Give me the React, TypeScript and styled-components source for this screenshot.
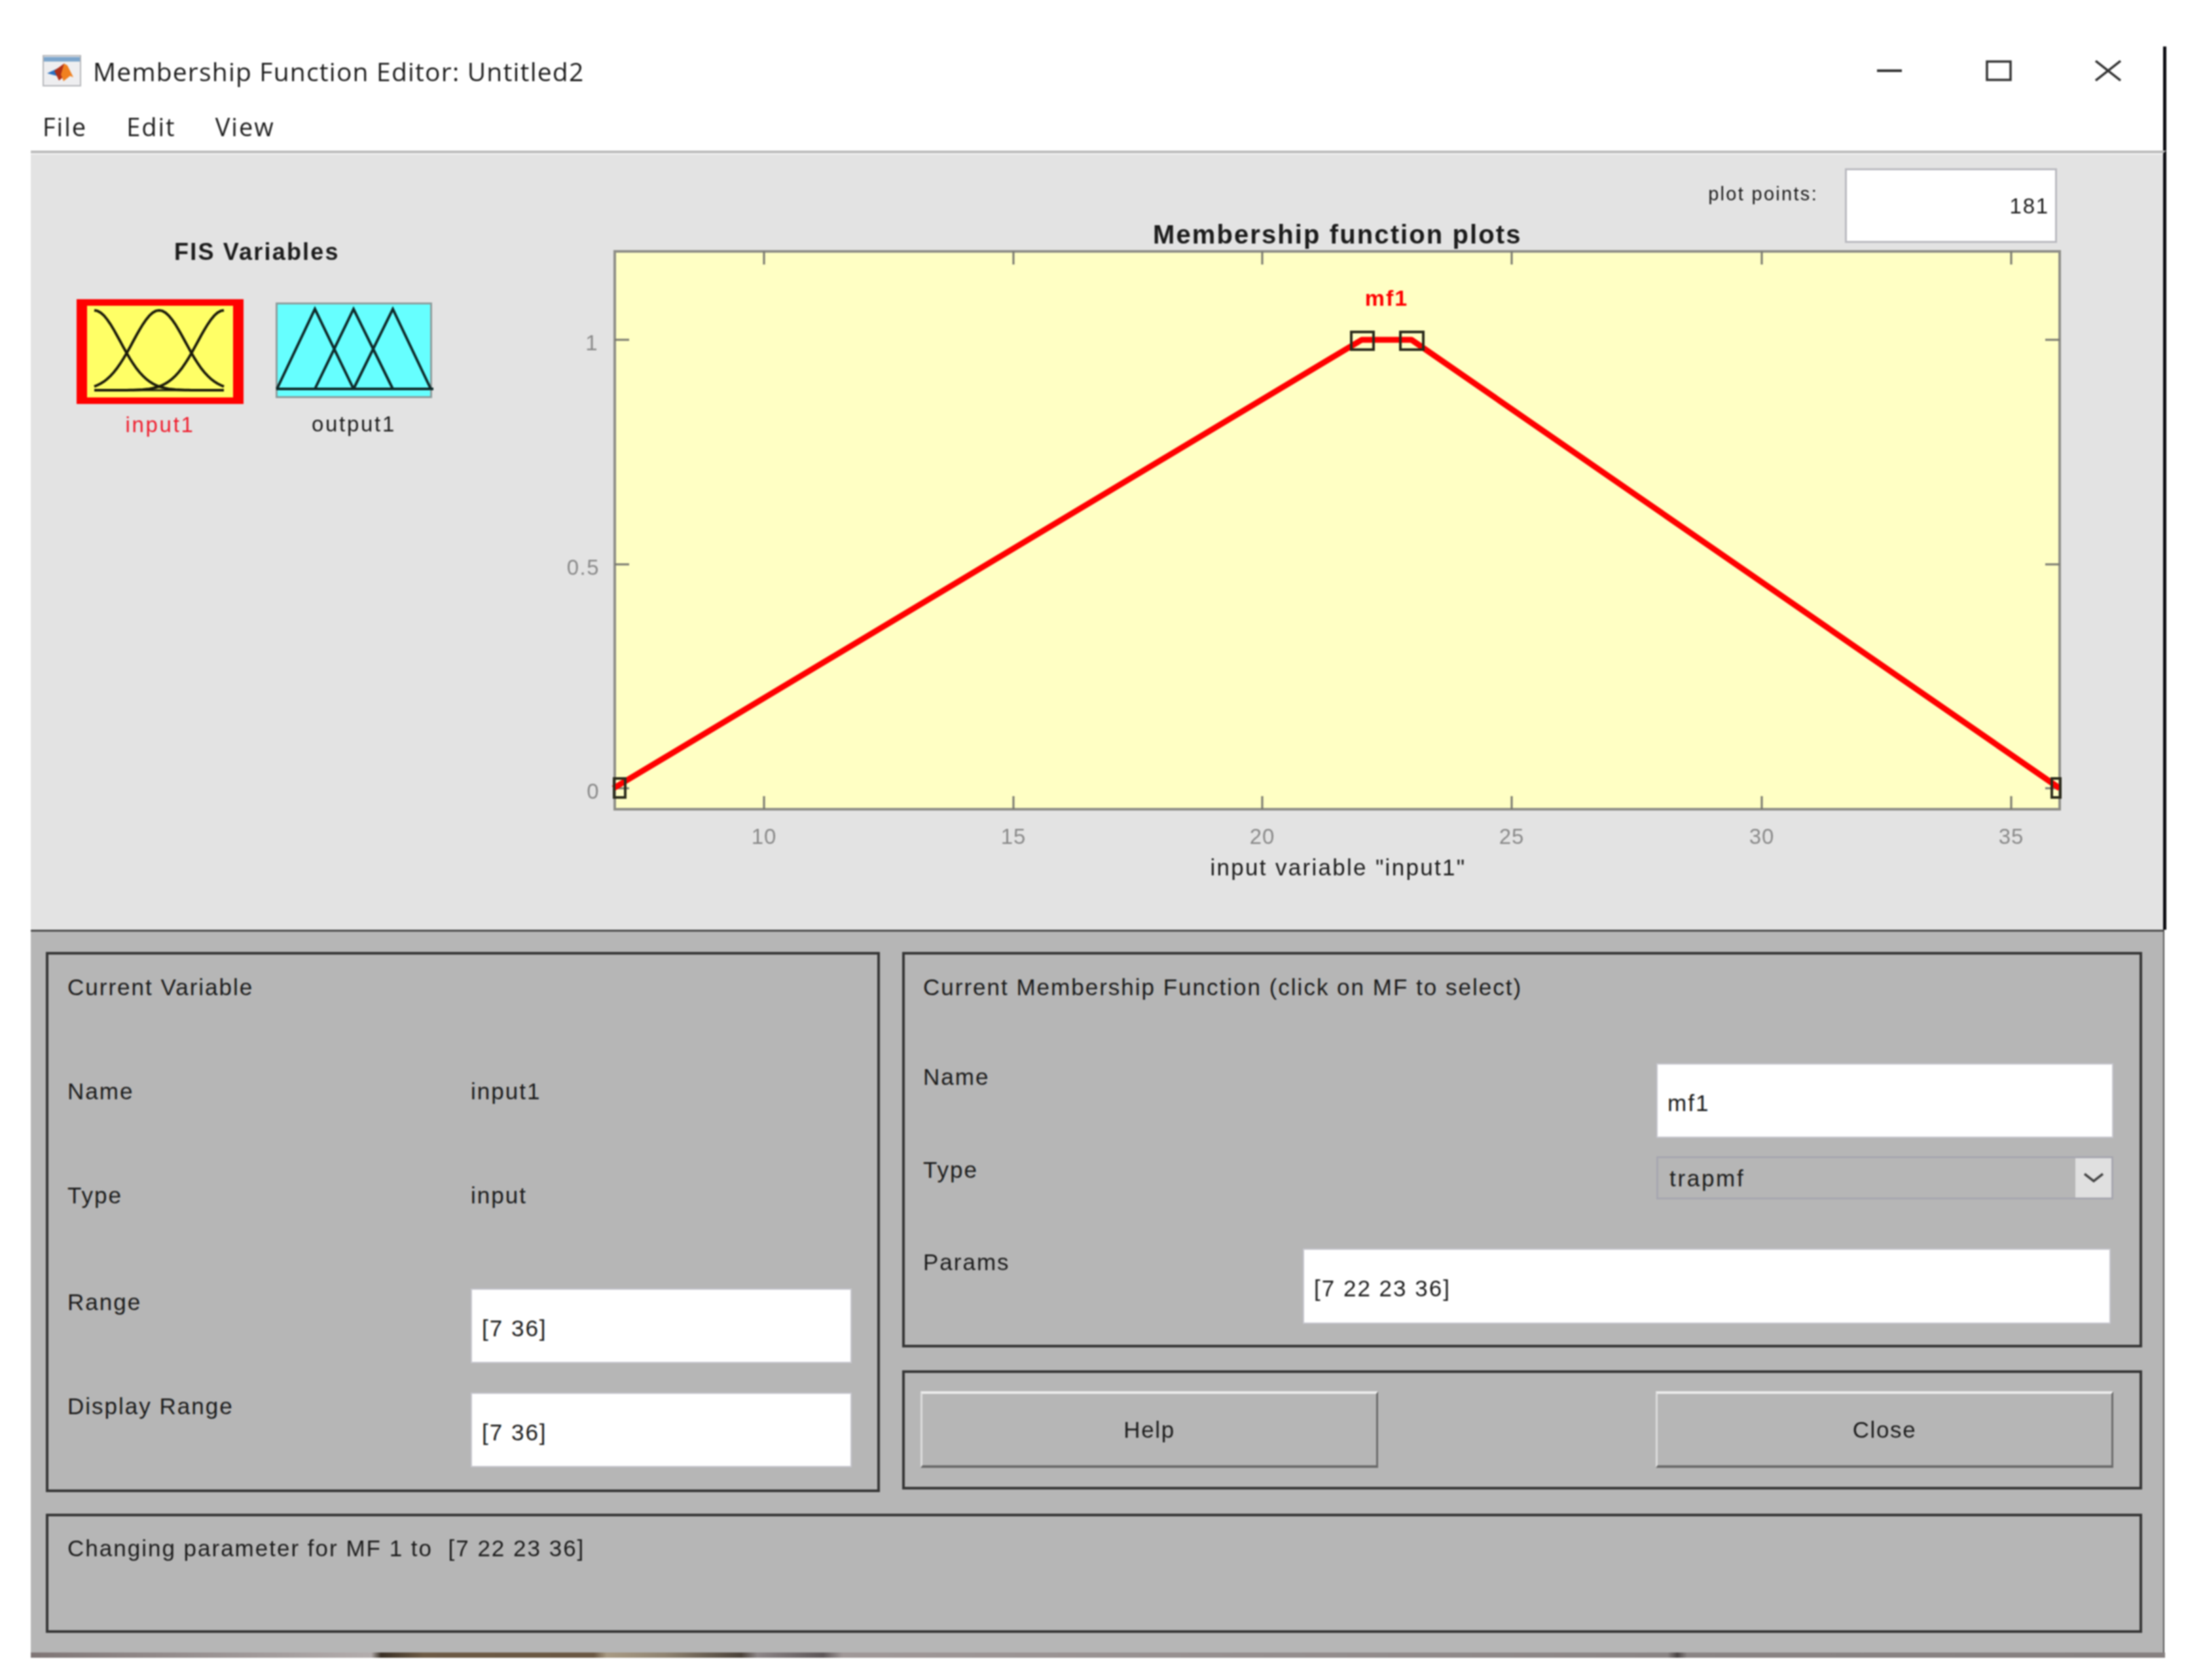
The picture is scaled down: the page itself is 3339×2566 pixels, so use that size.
import React from 'react';
import styled, { createGlobalStyle } from 'styled-components';

const GlobalStyle = createGlobalStyle`
  html, body {
    background: #fff;
    margin: 0;
    padding: 0;
  }
  body {
    color: #1c1c1c;
    font-family: "Liberation Sans", Arial, sans-serif;
  }
`;

// #region styled
const Page = styled.div`
  box-sizing: border-box;
  filter: blur(0.9px);
  height: 2566px;
  padding: 71px 0 0 47px;
  width: 3339px;
`;

const Window = styled.div`
  display: flex;
  flex-direction: column;
  width: 3262px;
`;

const TitleBar = styled.div`
  align-items: center;
  border-right: 5px solid #0c0c12;
  display: flex;
  height: 74px;
  padding-left: 18px;
`;

const AppIcon = styled.svg`
  height: 48px;
  margin-right: 18px;
  width: 59px;
`;

const TitleText = styled.span`
  font-family: "Open Sans", sans-serif;
  font-size: 39px;
  letter-spacing: 1.2px;
`;

const WindowButtons = styled.div`
  align-items: center;
  display: flex;
  margin-left: auto;
  padding-right: 64px;
`;

const WindowButton = styled.svg<{ $gap: number }>`
  height: 32px;
  margin-left: ${(p) => p.$gap}px;
  width: 40px;
`;

const MenuBar = styled.div`
  align-items: center;
  border-right: 5px solid #0c0c12;
  box-sizing: border-box;
  display: flex;
  font-family: "Open Sans", sans-serif;
  font-size: 38px;
  gap: 60px;
  height: 85px;
  letter-spacing: 2px;
  padding: 10px 0 0 18px;
`;

const TopArea = styled.div`
  background: #e3e3e3;
  border-right: 5px solid #0c0c12;
  border-top: 4px solid #bcbcbc;
  box-shadow: inset 0 2px 0 #f4f4f4;
  display: flex;
  height: 1186px;
`;

const FisColumn = styled.div`
  box-sizing: border-box;
  display: flex;
  flex-direction: column;
  padding: 131px 0 0 70px;
  width: 813px;
`;

const FisTitle = styled.div`
  font-size: 36px;
  font-weight: 700;
  letter-spacing: 2.2px;
  line-height: 40px;
  margin-left: 149px;
`;

const FisRow = styled.div`
  align-items: flex-start;
  display: flex;
  gap: 49px;
  margin-top: 52px;
`;

const FisTile = styled.div`
  align-items: center;
  display: flex;
  flex-direction: column;
`;

const InputPlate = styled.div`
  background: #ffff66;
  border-color: #f00;
  border-style: solid;
  border-width: 10px 16px;
  height: 140px;
  width: 223px;
`;

const OutputPlate = styled.div`
  background: #66ffff;
  border: 3px solid #8d9c9c;
  height: 140px;
  margin-top: 5px;
  width: 233px;
`;

const PlateDrawing = styled.svg`
  display: block;
  height: 100%;
  overflow: visible;
  width: 100%;
`;

const TileName = styled.div<{ $selected?: boolean; $top: number }>`
  color: ${(p) => (p.$selected ? '#f01c2c' : '#1c1c1c')};
  font-size: 33px;
  letter-spacing: 2.7px;
  line-height: 40px;
  margin-top: ${(p) => p.$top}px;
`;

const PlotColumn = styled.div`
  display: flex;
  flex-direction: column;
  flex: 1;
`;

const PlotHeader = styled.div`
  align-items: flex-end;
  display: flex;
  height: 146px;
  padding-right: 162px;
`;

const PlotTitle = styled.div`
  font-size: 40px;
  font-weight: 700;
  letter-spacing: 2.1px;
  line-height: 44px;
  margin-left: 901px;
`;

const PlotPoints = styled.div`
  align-items: flex-start;
  display: flex;
  height: 134px;
  margin-bottom: -11px;
  margin-left: auto;
`;

const PlotPointsLabel = styled.div`
  font-size: 29px;
  letter-spacing: 2.3px;
  line-height: 34px;
  margin: 22px 41px 0 0;
`;

const PlotPointsBox = styled.div`
  background: #fff;
  border: 3px solid #babac0;
  box-sizing: border-box;
  font-size: 33px;
  height: 114px;
  letter-spacing: 1.8px;
  line-height: 110px;
  padding-right: 9px;
  text-align: right;
  width: 324px;
`;

const PlotSvg = styled.svg`
  display: block;
  height: 965px;
  width: 2300px;
`;

const ChartLabel = styled.text`
  font-family: "Liberation Sans", Arial, sans-serif;
`;

const BottomArea = styled.div`
  background: #b6b6b6;
  border-right: 2px solid #555;
  border-top: 3px solid #4c4c4c;
  box-sizing: border-box;
  display: flex;
  flex-direction: column;
  gap: 33px;
  height: 1104px;
  margin-right: 3px;
  padding: 31px 34px 0 23px;
`;

const PanelRow = styled.div`
  display: flex;
  gap: 34px;
`;

const Panel = styled.div<{ $width?: number; $height: number }>`
  border: 4px solid #363636;
  box-sizing: border-box;
  flex: none;
  height: ${(p) => p.$height}px;
  width: ${(p) => (p.$width ? `${p.$width}px` : '100%')};
`;

const PanelColumn = styled.div`
  display: flex;
  flex-direction: column;
  gap: 35px;
`;

const Text = styled.div`
  font-size: 35px;
  letter-spacing: 2px;
  line-height: 42px;
  white-space: pre;
`;

const PanelTitle = styled(Text)`
  padding-top: 29px;
`;

const VariablePanel = styled(Panel)`
  padding-left: 29px;
`;

const VariableTitleBlock = styled.div`
  height: 188px;
`;

const VariableGrid = styled.div`
  display: grid;
  grid-template-columns: 616px 582px;
  grid-template-rows: 159px 163px 159px 114px;
`;

const Field = styled.div<{ $width?: number; $height?: number }>`
  background: #fff;
  border: 2px solid #c6c6ce;
  box-sizing: border-box;
  font-size: 35px;
  height: ${(p) => p.$height ?? 114}px;
  letter-spacing: 2px;
  line-height: 110px;
  padding: 4px 0 0 15px;
  width: ${(p) => (p.$width ? `${p.$width}px` : '100%')};
`;

const FunctionPanel = styled(Panel)`
  padding: 0 40px 0 28px;
`;

const FunctionTitleBlock = styled.div`
  height: 166px;
`;

const FunctionRow = styled.div<{ $height: number }>`
  display: flex;
  height: ${(p) => p.$height}px;
  justify-content: space-between;
`;

const SelectBox = styled.div`
  background: #b6b6b6;
  border: 3px solid #a7a7b0;
  box-sizing: border-box;
  display: flex;
  font-size: 35px;
  height: 66px;
  letter-spacing: 2.7px;
  line-height: 62px;
  padding-left: 17px;
  width: 698px;
`;

const SelectArrow = styled.div`
  align-items: center;
  background: #e0e0e0;
  display: flex;
  justify-content: center;
  margin-left: auto;
  width: 55px;
`;

const ArrowIcon = styled.svg`
  height: 16px;
  width: 32px;
`;

const ParamsField = styled(Field)`
  margin-right: 4px;
`;

const ButtonPanel = styled(Panel)`
  align-items: flex-start;
  display: flex;
  justify-content: space-between;
  padding: 28px 40px 0 24px;
`;

const PushButton = styled.button`
  background: #b6b6b6;
  border-color: #ececec #6c6c6c #6c6c6c #dcdcdc;
  border-style: solid;
  border-width: 4px 3px 4px 3px;
  color: #1c1c1c;
  font-family: "Liberation Sans", Arial, sans-serif;
  font-size: 35px;
  height: 117px;
  letter-spacing: 1.65px;
  padding: 0;
  width: 699px;
`;

const StatusPanel = styled(Panel)`
  padding: 28px 0 0 29px;
  width: 3202px;
`;

const WallpaperStrip = styled.div`
  background: linear-gradient(
    90deg,
    #7f7676 0,
    #a39c9c 370px,
    #b3adad 520px,
    #3a3026 535px,
    #6e5b46 600px,
    #6b5844 860px,
    #a89a84 880px,
    #8f8372 970px,
    #4b423a 1085px,
    #8d8688 1110px,
    #5d5658 1210px,
    #a09898 1240px,
    #8a8484 2500px,
    #4a4444 2515px,
    #8a8484 2530px,
    #868080 3262px
  );
  height: 8px;
  width: 3260px;
`;
// #endregion

const AXIS = { left: 939, right: 3146, top: 384, bottom: 1236 };
const X_TICKS = [
  { x: 1167, label: '10' },
  { x: 1548, label: '15' },
  { x: 1928, label: '20' },
  { x: 2309, label: '25' },
  { x: 2691, label: '30' },
  { x: 3072, label: '35' },
];
const Y_TICKS = [
  { y: 519, label: '1', x: 914 },
  { y: 862, label: '0.5', x: 916 },
  { y: 1204, label: '0', x: 916 },
];
const HANDLES = [
  { x: 2064, y: 507, w: 34, h: 27 },
  { x: 2139, y: 507, w: 35, h: 27 },
  { x: 938, y: 1189, w: 17, h: 29 },
  { x: 3134, y: 1189, w: 13, h: 29 },
];

const gaussPath = (center: number): string => {
  const points: string[] = [];
  for (let i = 0; i <= 40; i += 1) {
    const x = 11 + (198 * i) / 40;
    const y = 129 - 122 * Math.exp(-((x - center) ** 2) / (2 * 40 * 40));
    points.push(`${i === 0 ? 'M' : 'L'}${x.toFixed(1)} ${y.toFixed(1)}`);
  }
  return points.join(' ');
};

const MatlabIcon: React.FC = () => (
  <AppIcon viewBox="0 0 59 48">
    <rect x="1" y="1" width="57" height="46" fill="#eeeef0" stroke="#b4b6ba" strokeWidth="2" />
    <rect x="2" y="3" width="55" height="7" fill="#7da6cc" />
    <polygon points="7,28 24,20 26,33" fill="#2a6fc0" />
    <polygon points="18,24 33,13 30,35 25,39" fill="#b03018" />
    <polygon points="33,13 38,16 47,34 42,32 32,40 28,30" fill="#f08020" />
  </AppIcon>
);

const InputPlot: React.FC = () => (
  <PlateDrawing viewBox="0 0 223 140">
    <path d="M11 129H209" fill="none" stroke="#1b1b0a" strokeWidth="3" />
    {[11, 110, 209].map((center) => (
      <path key={center} d={gaussPath(center)} fill="none" stroke="#1b1b0a" strokeWidth="4" />
    ))}
  </PlateDrawing>
);

const OutputPlot: React.FC = () => (
  <PlateDrawing viewBox="0 0 233 140">
    <path
      d="M-2 129H238 M-1 129L57 7L116 129 M57 129L116 7L176 129 M116 129L176 7L234 129"
      fill="none"
      stroke="#0f2a2a"
      strokeWidth="4"
    />
  </PlateDrawing>
);

const MembershipPlot: React.FC = () => (
  <PlotSvg viewBox="860 380 2300 965">
    <rect
      x={AXIS.left}
      y={AXIS.top}
      width={AXIS.right - AXIS.left}
      height={AXIS.bottom - AXIS.top}
      fill="#ffffc4"
      stroke="#8f8f88"
      strokeWidth="4"
    />
    {X_TICKS.map((t) => (
      <g key={t.x}>
        <path d={`M${t.x} ${AXIS.top}v20M${t.x} ${AXIS.bottom}v-20`} stroke="#77776f" strokeWidth="3" />
        <ChartLabel x={t.x} y={1289} fontSize="33" fill="#8a8a8a" textAnchor="middle" letterSpacing="1">
          {t.label}
        </ChartLabel>
      </g>
    ))}
    {Y_TICKS.map((t) => (
      <g key={t.y}>
        <path d={`M${AXIS.left} ${t.y}h22M${AXIS.right} ${t.y}h-22`} stroke="#77776f" strokeWidth="3" />
        <ChartLabel x={t.x} y={t.y + 16} fontSize="33" fill="#8a8a8a" textAnchor="end" letterSpacing="1.5">
          {t.label}
        </ChartLabel>
      </g>
    ))}
    <polyline
      points="937,1204 2080,519 2156,519 3146,1204"
      fill="none"
      stroke="#ff0000"
      strokeWidth="9"
      strokeLinejoin="round"
    />
    {HANDLES.map((h) => (
      <rect key={h.x} x={h.x} y={h.y} width={h.w} height={h.h} fill="none" stroke="#2b2b1c" strokeWidth="4" />
    ))}
    <ChartLabel x={2118} y={467} fontSize="34" fontWeight="700" fill="#ff0000" textAnchor="middle" letterSpacing="2">
      mf1
    </ChartLabel>
    <ChartLabel x={2044} y={1337} fontSize="35" fill="#1c1c1c" textAnchor="middle" letterSpacing="2.3">
      input variable "input1"
    </ChartLabel>
  </PlotSvg>
);

const App: React.FC = () => (
  <Page>
    <GlobalStyle />
    <Window>
      <TitleBar>
        <MatlabIcon />
        <TitleText>Membership Function Editor: Untitled2</TitleText>
        <WindowButtons>
          <WindowButton $gap={0} viewBox="0 0 40 32">
            <path d="M1 16H39" stroke="#333" strokeWidth="4" />
          </WindowButton>
          <WindowButton $gap={127} viewBox="0 0 40 32">
            <rect x="2" y="2" width="36" height="28" fill="none" stroke="#333" strokeWidth="3.5" />
          </WindowButton>
          <WindowButton $gap={127} viewBox="0 0 40 32">
            <path d="M1 1L39 31M39 1L1 31" stroke="#333" strokeWidth="3.5" />
          </WindowButton>
        </WindowButtons>
      </TitleBar>
      <MenuBar>
        <span>File</span>
        <span>Edit</span>
        <span>View</span>
      </MenuBar>
      <TopArea>
        <FisColumn>
          <FisTitle>FIS Variables</FisTitle>
          <FisRow>
            <FisTile>
              <InputPlate>
                <InputPlot />
              </InputPlate>
              <TileName $selected $top={12}>input1</TileName>
            </FisTile>
            <FisTile>
              <OutputPlate>
                <OutputPlot />
              </OutputPlate>
              <TileName $top={20}>output1</TileName>
            </FisTile>
          </FisRow>
        </FisColumn>
        <PlotColumn>
          <PlotHeader>
            <PlotTitle>Membership function plots</PlotTitle>
            <PlotPoints>
              <PlotPointsLabel>plot points:</PlotPointsLabel>
              <PlotPointsBox>181</PlotPointsBox>
            </PlotPoints>
          </PlotHeader>
          <MembershipPlot />
        </PlotColumn>
      </TopArea>
      <BottomArea>
        <PanelRow>
          <VariablePanel $width={1274} $height={825}>
            <VariableTitleBlock>
              <PanelTitle>Current Variable</PanelTitle>
            </VariableTitleBlock>
            <VariableGrid>
              <Text>Name</Text>
              <Text>input1</Text>
              <Text>Type</Text>
              <Text>input</Text>
              <Text>Range</Text>
              <Field>[7 36]</Field>
              <Text>Display Range</Text>
              <Field>[7 36]</Field>
            </VariableGrid>
          </VariablePanel>
          <PanelColumn>
            <FunctionPanel $width={1894} $height={604}>
              <FunctionTitleBlock>
                <PanelTitle>Current Membership Function (click on MF to select)</PanelTitle>
              </FunctionTitleBlock>
              <FunctionRow $height={142}>
                <Text>Name</Text>
                <Field $width={698}>mf1</Field>
              </FunctionRow>
              <FunctionRow $height={141}>
                <Text>Type</Text>
                <SelectBox>
                  trapmf
                  <SelectArrow>
                    <ArrowIcon viewBox="0 0 32 16">
                      <path d="M2 2L16 13L30 2" fill="none" stroke="#444" strokeWidth="3.5" />
                    </ArrowIcon>
                  </SelectArrow>
                </SelectBox>
              </FunctionRow>
              <FunctionRow $height={115}>
                <Text>Params</Text>
                <ParamsField $width={1234} $height={115}>[7 22 23 36]</ParamsField>
              </FunctionRow>
            </FunctionPanel>
            <ButtonPanel $width={1894} $height={182}>
              <PushButton>Help</PushButton>
              <PushButton>Close</PushButton>
            </ButtonPanel>
          </PanelColumn>
        </PanelRow>
        <StatusPanel $height={182}>
          <Text>Changing parameter for MF 1 to  [7 22 23 36]</Text>
        </StatusPanel>
      </BottomArea>
      <WallpaperStrip />
    </Window>
  </Page>
);

export default App;
